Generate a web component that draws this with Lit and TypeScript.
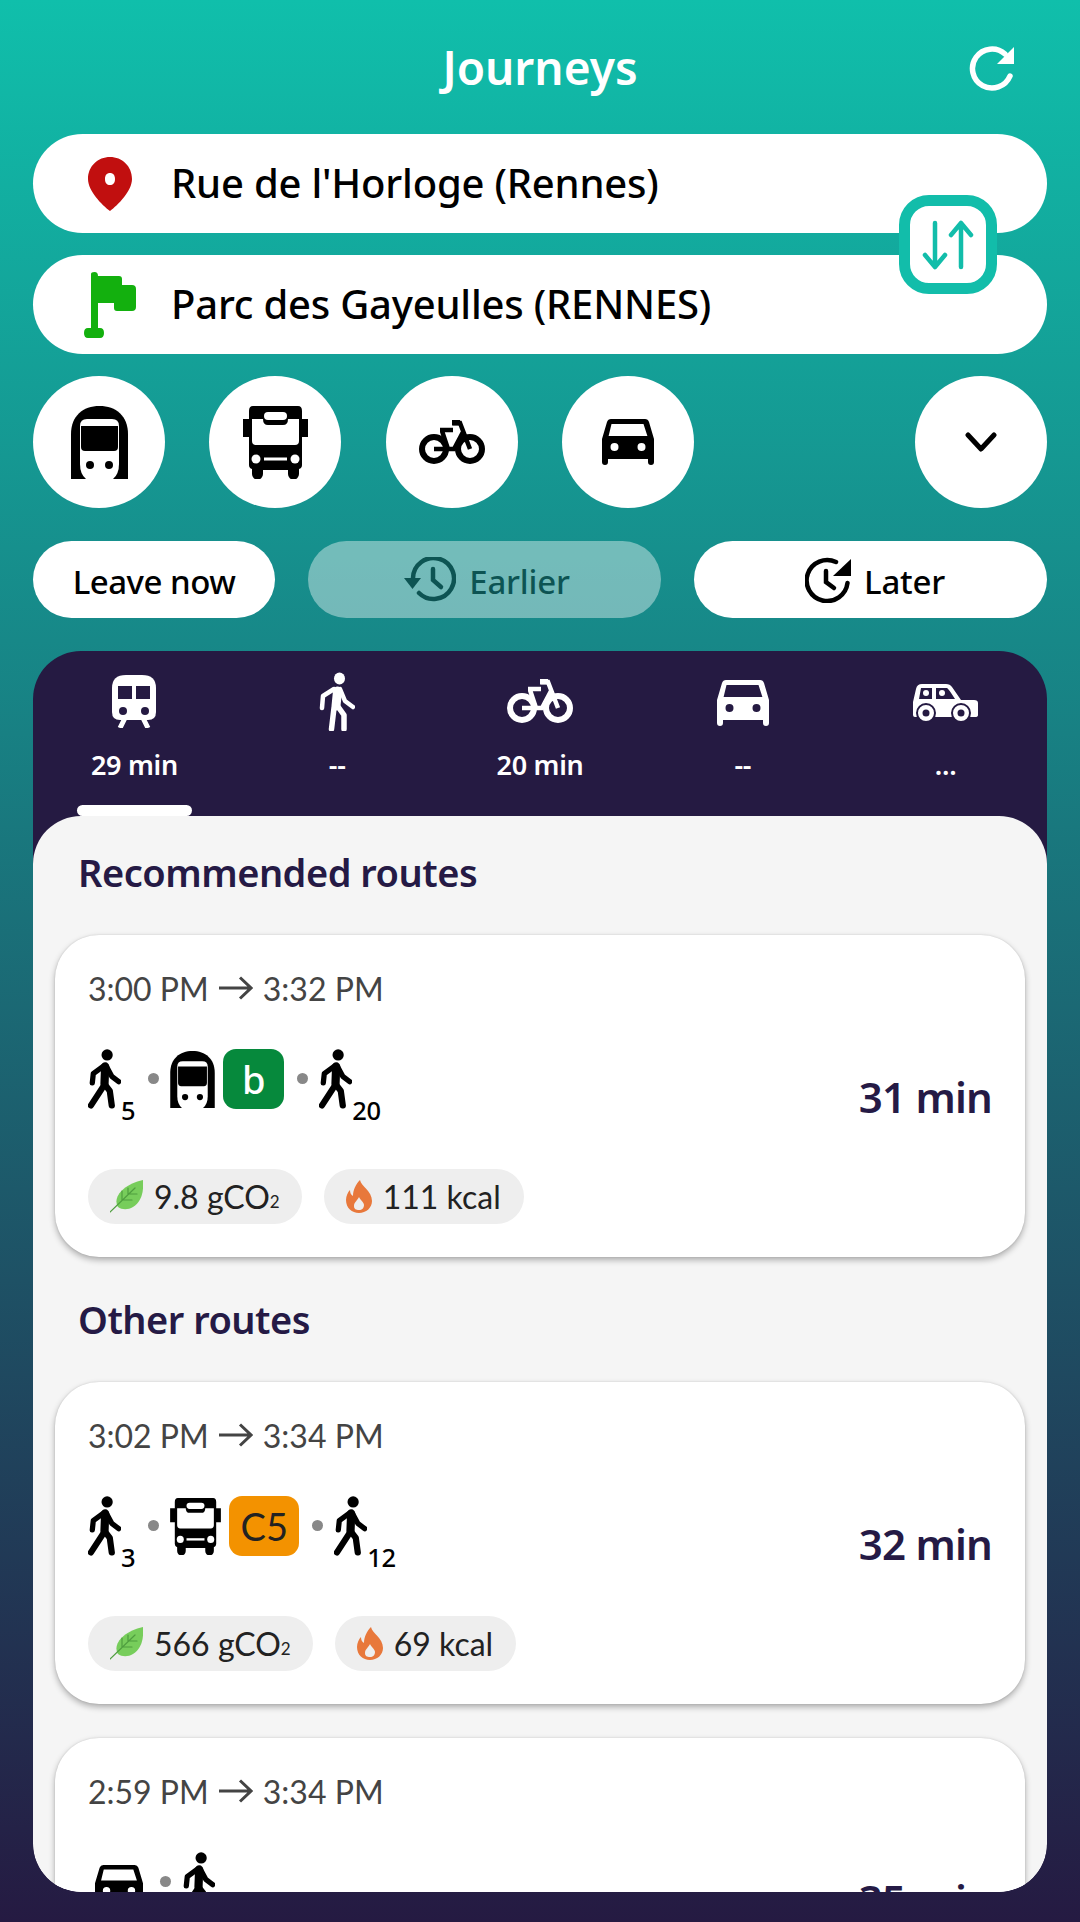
import { LitElement, css, html } from 'lit';
import { customElement } from 'lit/decorators.js';

const CAR = 'M9 0h34q3 0 4 3l5 17v23q0 3-3 3t-3-3v-3H6v3q0 3-3 3t-3-3V20L5 3q1-3 4-3zM9.500 5 6.600 17h38.800L41.500 5zM12.500 24a4 4 0 1 0 0 8 4 4 0 0 0 0-8zM39.500 24a4 4 0 1 0 0 8 4 4 0 0 0 0-8z';

const carIcon = (w: number, h: number) => html`<svg width=${w} height=${h} viewBox="0 0 52 46" preserveAspectRatio="none" fill="currentColor" fill-rule="evenodd"><path d=${CAR} /></svg>`;

const trainIcon = (w: number, h: number) => html`<svg width=${w} height=${h} viewBox="0 0 57 73" fill-rule="evenodd">
  <path fill="#000" d="M0 73V28C0 10 12 0 28.500 0S57 10 57 28v45z" />
  <path fill="#fff" d="M9 20q0-7 7-7h25q7 0 7 7v38q0 10-6 15H15q-6-5-6-15z" />
  <path fill="#000" d="M10 20h37v21q0 4-4 4H14q-4 0-4-4z" />
  <circle cx="19" cy="59" r="4" fill="#000" /><circle cx="38" cy="59" r="4" fill="#000" />
</svg>`;

const busIcon = (w: number, h: number) => html`<svg width=${w} height=${h} viewBox="0 0 65 73">
  <path fill="#000" d="M10 0h45q4 0 4 5v8h6v18h-6v28q0 3-3 4v5a5.500 5.500 0 0 1-11 0v-4H20v4a5.500 5.500 0 0 1-11 0v-5q-3-1-3-4V31H0V13h6V5q0-5 4-5z" />
  <path fill="#fff" d="M9 13h11q0 6 5 6h15q5 0 5-6h11v22q0 4-4 4H13q-4 0-4-4z" />
  <rect x="21" y="6" width="23" height="8" rx="4" fill="#fff" />
  <circle cx="13" cy="53" r="4.500" fill="#fff" /><circle cx="52" cy="53" r="4.500" fill="#fff" />
  <rect x="21" y="51.500" width="23" height="3" fill="#fff" />
</svg>`;

const bikeIcon = (w: number, h: number) => html`<svg width=${w} height=${h} viewBox="0 0 66 44" fill="none" stroke="currentColor">
  <circle cx="15" cy="29" r="12" stroke-width="6" />
  <circle cx="51" cy="29" r="12" stroke-width="6" />
  <path stroke-width="4.500" d="M15 29h20l9-17M23 11l6 18M21 10h13M34 3h7l10 26" />
  <path stroke-width="6" d="M33 2.500h8" />
</svg>`;

const walkerFill = () => html`<svg width="33" height="60" viewBox="0 0 100 180" fill="none" stroke="#000" stroke-linecap="round" stroke-linejoin="round">
  <circle cx="58" cy="17" r="17" fill="#000" stroke="none" />
  <path stroke-width="25" d="M52 52 50 105" />
  <path stroke-width="16" d="M48 50 16 74l-3 28M56 52l16 30 21 16" />
  <path stroke-width="19" d="M48 110 9 170M52 108l14 18 6 44" />
</svg>`;

const walkerUpright = () => html`<svg width="36" height="59" viewBox="0 0 36 59" fill="none" stroke="currentColor" stroke-linecap="round" stroke-linejoin="round">
  <ellipse cx="20.500" cy="6.500" rx="5.500" ry="6" fill="currentColor" stroke="none" />
  <path stroke-width="9" d="M18.500 19 17 34" />
  <path stroke-width="4.500" d="M15 17 4 24l-1 12M21 17l5 12 8 6" />
  <path stroke-width="5.500" d="M15 36l-2.500 21M20 36l5 7v14" />
</svg>`;

const routes = [
  {
    times: ['3:00 PM', '3:32 PM'], duration: '31 min', co2: '9.8', kcal: '111',
    legs: [{ walk: 5 }, { mode: 'train', line: 'b', cls: 'green' }, { walk: 20 }],
  },
  {
    times: ['3:02 PM', '3:34 PM'], duration: '32 min', co2: '566', kcal: '69',
    legs: [{ walk: 3 }, { mode: 'bus', line: 'C5', cls: 'orange' }, { walk: 12 }],
  },
  {
    times: ['2:59 PM', '3:34 PM'], duration: '35 min', co2: '', kcal: '',
    legs: [{ mode: 'car' }, { walk: 10 }],
  },
];

const leaf = html`<svg width="33" height="33" viewBox="0 0 33 33">
  <path fill="#77cd5b" d="M33 0c1 13-2 22-10 27-5 3-11 3-15 0C2 17 14 4 33 0z" />
  <path fill="none" stroke="#4f9e3f" stroke-width="1.200" stroke-linecap="round" d="M0 32 25 8M12 20V11M18 14V8M12 20h10M18 14h9" />
</svg>`;

const flame = html`<svg width="26" height="33" viewBox="0 0 26 33">
  <path fill="#e8783b" fill-rule="evenodd" d="M14 0c1 6 12 11 12 21 0 7-6 12-13 12S0 28 0 20c0-4 2-8 4-10 0 3 1 5 3 6 0-6 3-12 7-16zm-1 17c-1 3-5 5-5 9 0 3 2 4 5 4s5-2 5-5c0-3-4-5-5-8z" />
</svg>`;

@customElement('app-root')
export class AppRoot extends LitElement {
  static styles = css`
    :host {
      display: block;
      width: 1080px;
      height: 1922px;
      box-sizing: border-box;
      padding: 0 33px;
      overflow: hidden;
      background: linear-gradient(180deg, #10bfab 0%, #251a42 100%);
      font-family: 'Noto Sans', sans-serif;
      color: #000;
    }
    svg { display: block; flex: none; }

    .header {
      height: 134px;
      display: flex;
      align-items: center;
      justify-content: center;
      position: relative;
      color: #fff;
    }
    .title {
      font-size: 46px;
      font-weight: 600;
    }
    .refresh {
      position: absolute;
      right: 30px;
      top: 45px;
    }

    .places {
      position: relative;
      display: flex;
      flex-direction: column;
      gap: 22px;
    }
    .place {
      height: 99px;
      box-sizing: border-box;
      padding-bottom: 3px;
      border-radius: 50px;
      background: #fff;
      display: flex;
      align-items: center;
      font-size: 40px;
      font-weight: 500;
      letter-spacing: -0.2px;
    }
    .place-icon {
      width: 138px;
      box-sizing: border-box;
      padding-top: 3px;
      display: flex;
    }
    .place-icon.pin { padding-left: 55px; }
    .place-icon.flag { padding-left: 51px; }
    .swap {
      position: absolute;
      left: 866px;
      top: 61px;
      width: 98px;
      height: 99px;
      box-sizing: border-box;
      border: 11px solid #12bdaa;
      border-radius: 30px;
      background: #fff;
      display: flex;
      align-items: center;
      justify-content: center;
    }

    .modes {
      display: flex;
      gap: 44.34px;
      margin-top: 22px;
    }
    .mode {
      width: 132px;
      height: 132px;
      border-radius: 50%;
      background: #fff;
      display: flex;
      align-items: center;
      justify-content: center;
    }
    .mode.more { margin-left: auto; }

    .when {
      display: grid;
      grid-template-columns: 242px 1fr 1fr;
      gap: 33px;
      margin-top: 33px;
    }
    .when-btn {
      height: 77px;
      border-radius: 39px;
      background: #fff;
      display: flex;
      align-items: center;
      justify-content: center;
      gap: 13px;
      font-size: 33px;
      font-weight: 500;
      letter-spacing: -0.2px;
    }
    .when-btn.now { letter-spacing: -0.5px; }
    .when-btn.off { opacity: 0.4; padding-left: 5px; }
    .when-btn.next { padding-left: 9px; }
    .when-btn span { padding-top: 3px; }

    .results {
      margin-top: 33px;
      height: 1241px;
      border-radius: 48px;
      background: #251a42;
      overflow: hidden;
      display: flex;
      flex-direction: column;
    }
    .tabs {
      height: 165px;
      flex: none;
      display: grid;
      grid-template-columns: repeat(5, 1fr);
    }
    .tab {
      display: flex;
      flex-direction: column;
      align-items: center;
      padding-top: 20px;
      color: #fff;
    }
    .tab-icon {
      height: 60px;
      display: flex;
      align-items: center;
      justify-content: center;
    }
    .tab-icon.low { padding-top: 4px; box-sizing: border-box; }
    .tab-label {
      margin-top: 16px;
      height: 36px;
      line-height: 36px;
      font-size: 27px;
      font-weight: 600;
      letter-spacing: -0.3px;
    }
    .indicator {
      margin-top: auto;
      width: 115px;
      height: 11px;
      border-radius: 6px;
      background: #fff;
    }

    .panel {
      flex: 1;
      min-height: 0;
      overflow: hidden;
      background: #f5f5f5;
      border-radius: 48px;
      padding: 0 22px;
    }
    .section {
      height: 62px;
      line-height: 62px;
      padding: 25px 0 32px 23px;
      font-size: 38px;
      font-weight: 600;
      letter-spacing: -0.5px;
      color: #251a45;
    }
    .section.next { padding-top: 31px; }

    .card {
      height: 322px;
      box-sizing: border-box;
      border-radius: 44px;
      background: #fff;
      box-shadow: 0 3px 6px rgba(0, 0, 0, 0.3), 0 0 2px rgba(0, 0, 0, 0.12);
      display: flex;
      align-items: center;
      justify-content: space-between;
      padding: 33px;
      font-family: 'Lato', sans-serif;
    }
    .card + .card { margin-top: 34px; }
    .card-main { align-self: flex-start; }
    .times {
      height: 40px;
      display: flex;
      align-items: center;
      gap: 10px;
      font-size: 32px;
      color: #444;
    }
    .legs {
      height: 60px;
      margin-top: 41px;
      display: flex;
      align-items: center;
    }
    .leg-car {
      display: flex;
      margin: 8px 4px 0 7px;
    }
    .walk-min {
      align-self: flex-end;
      margin-bottom: -15px;
      font-family: 'Noto Sans', sans-serif;
      font-size: 25.5px;
      font-weight: 500;
      line-height: 28px;
      letter-spacing: -0.3px;
    }
    .dot {
      width: 11px;
      height: 11px;
      margin: 0 11px 2px 13px;
      border-radius: 50%;
      background: #888;
    }
    .line {
      height: 60px;
      margin-left: 8px;
      border-radius: 13px;
      display: flex;
      align-items: center;
      justify-content: center;
      font-size: 38px;
    }
    .line.green { width: 61px; background: #06893c; color: #fff; font-weight: 500; font-family: 'Noto Sans', sans-serif; }
    .line.orange { width: 70px; background: #f39200; color: #222; }
    .pills {
      display: flex;
      gap: 22px;
      margin-top: 60px;
    }
    .pill {
      height: 55px;
      padding: 0 22px;
      border-radius: 28px;
      background: #eee;
      display: flex;
      align-items: center;
      gap: 11px;
      font-size: 32px;
      color: #222;
    }
    .pill.kcal { padding-right: 23px; }
    .pill small { font-size: 17px; align-self: flex-end; margin: 0 0 12px -11px; }
    .duration {
      font-family: 'Noto Sans', sans-serif;
      font-size: 42px;
      font-weight: 600;
      letter-spacing: -0.8px;
      color: #251a45;
    }
  `;

  private renderLeg(leg: any) {
    if (leg.walk) {
      return html`${walkerFill()}<span class="walk-min">${leg.walk}</span>`;
    }
    if (leg.mode === 'car') {
      return html`<span class="leg-car">${carIcon(48, 42)}</span>`;
    }
    const icon = leg.mode === 'train' ? trainIcon(45, 57) : busIcon(51, 57);
    return html`${icon}<span class="line ${leg.cls}">${leg.line}</span>`;
  }

  private renderRoute(r: (typeof routes)[number]) {
    return html`
      <div class="card">
        <div class="card-main">
          <div class="times">
            ${r.times[0]}
            <svg width="34" height="24" viewBox="0 0 34 24" fill="none" stroke="#444" stroke-width="3"><path d="M0 12h32M21 1.500 32 12 21 22.500" /></svg>
            ${r.times[1]}
          </div>
          <div class="legs">
            ${r.legs.map((leg, i) => html`${i ? html`<span class="dot"></span>` : ''}${this.renderLeg(leg)}`)}
          </div>
          ${r.co2 ? html`
            <div class="pills">
              <div class="pill">${leaf}<span>${r.co2} gCO</span><small>2</small></div>
              <div class="pill kcal">${flame}<span>${r.kcal} kcal</span></div>
            </div>` : ''}
        </div>
        <div class="duration">${r.duration}</div>
      </div>
    `;
  }

  render() {
    const [first, second, third] = routes;
    return html`
      <div class="header">
        <div class="title">Journeys</div>
        <svg class="refresh" width="48" height="48" viewBox="0 0 48 48" fill="none" stroke="#fff" stroke-width="5.500" stroke-linecap="round">
          <path d="M41 31A19.500 19.500 0 1 1 36 9" />
          <path d="M45 2v17H28z" fill="#fff" stroke="none" />
        </svg>
      </div>

      <div class="places">
        <div class="place">
          <div class="place-icon pin">
            <svg width="44" height="54" viewBox="0 0 44 54"><path fill="#c10f0f" fill-rule="evenodd" d="M22 0c12 0 22 9 22 22 0 12-14 26-22 32C14 48 0 34 0 22 0 9 10 0 22 0zm0 16c-3 0-5 2-5 6s2 6 5 6 5-2 5-6-2-6-5-6z" /></svg>
          </div>
          Rue de l'Horloge (Rennes)
        </div>
        <div class="place">
          <div class="place-icon flag">
            <svg width="52" height="66" viewBox="0 0 52 66"><path fill="#13b00e" d="M7 2q0-2 3.500-2Q14 0 14 4h21q3 0 3 3v6h10q4 0 4 4v18q0 4-4 4H33q-3 0-3-3v-5H14v25h2q4 0 4 5t-4 5H4q-4 0-4-5t4-5h3z" /></svg>
          </div>
          Parc des Gayeulles (RENNES)
        </div>
        <div class="swap">
          <svg width="52" height="50" viewBox="0 0 52 50" fill="none" stroke="#12bdaa" stroke-width="4.500" stroke-linecap="round" stroke-linejoin="round">
            <path d="M13 3v44M3 35l10 12 10-12M39 47V3M29 15 39 3l10 12" />
          </svg>
        </div>
      </div>

      <div class="modes">
        <div class="mode">${trainIcon(57, 73)}</div>
        <div class="mode">${busIcon(65, 73)}</div>
        <div class="mode">${bikeIcon(66, 44)}</div>
        <div class="mode">${carIcon(52, 46)}</div>
        <div class="mode more">
          <svg width="32" height="20" viewBox="0 0 32 20" fill="none" stroke="#000" stroke-width="5" stroke-linecap="round" stroke-linejoin="round"><path d="M3 3l13 14L29 3" /></svg>
        </div>
      </div>

      <div class="when">
        <div class="when-btn now"><span>Leave now</span></div>
        <div class="when-btn off">
          <svg width="52" height="46" viewBox="0 0 52 46" fill="none" stroke="#000" stroke-width="4.500" stroke-linecap="round">
            <path d="M15 36a20.500 20.500 0 1 0-6-15" />
            <path d="M0 21h17l-8.500 11z" fill="#000" stroke="none" />
            <path d="M29 12v11l8 7" />
          </svg>
          <span>Earlier</span>
        </div>
        <div class="when-btn next">
          <svg width="46" height="46" viewBox="0 0 46 46" fill="none" stroke="#000" stroke-width="4.500" stroke-linecap="round">
            <path d="M42.500 26A20.500 20.500 0 1 1 31 5" />
            <path d="M46 2v17H28z" fill="#000" stroke="none" />
            <path d="M21 14v11l8 6" />
          </svg>
          <span>Later</span>
        </div>
      </div>

      <div class="results">
        <div class="tabs">
          <div class="tab">
            <div class="tab-icon">
              <svg width="44" height="53" viewBox="0 0 44 53">
                <path fill="#fff" d="M14 0h16q14 0 14 13v24q0 8-8 8H8q-8 0-8-8V13Q0 0 14 0z" />
                <rect x="6" y="11" width="14" height="13" fill="#251a42" /><rect x="24" y="11" width="14" height="13" fill="#251a42" />
                <circle cx="11" cy="36" r="4" fill="#251a42" /><circle cx="33" cy="36" r="4" fill="#251a42" />
                <path stroke="#fff" stroke-width="5" fill="none" d="M13 43 8 53M31 43l5 10" />
              </svg>
            </div>
            <div class="tab-label">29 min</div>
            <div class="indicator"></div>
          </div>
          <div class="tab">
            <div class="tab-icon">${walkerUpright()}</div>
            <div class="tab-label">--</div>
          </div>
          <div class="tab">
            <div class="tab-icon">${bikeIcon(66, 44)}</div>
            <div class="tab-label">20 min</div>
          </div>
          <div class="tab">
            <div class="tab-icon low">${carIcon(52, 46)}</div>
            <div class="tab-label">--</div>
          </div>
          <div class="tab">
            <div class="tab-icon low">
              <svg width="65" height="39" viewBox="0 0 65 39">
                <path fill="#fff" d="M9 0h24q4 0 6 3l9 13h13q4 0 4 3v12q0 2-3 2H2q-2 0-2-2V18L3 5q1-5 6-5z" />
                <path fill="#251a42" d="M8 4h11v11H6zM23 4h11q1 0 8 11H23z" />
                <circle cx="13" cy="9" r="3" fill="#fff" /><circle cx="29" cy="9" r="3" fill="#fff" />
                <circle cx="13" cy="29" r="9" fill="#fff" stroke="#251a42" stroke-width="2" /><circle cx="13" cy="29" r="3.500" fill="#251a42" />
                <circle cx="48" cy="29" r="9" fill="#fff" stroke="#251a42" stroke-width="2" /><circle cx="48" cy="29" r="3.500" fill="#251a42" />
              </svg>
            </div>
            <div class="tab-label">...</div>
          </div>
        </div>

        <div class="panel">
          <div class="section">Recommended routes</div>
          ${this.renderRoute(first)}
          <div class="section next">Other routes</div>
          ${this.renderRoute(second)}
          ${this.renderRoute(third)}
        </div>
      </div>
    `;
  }
}
